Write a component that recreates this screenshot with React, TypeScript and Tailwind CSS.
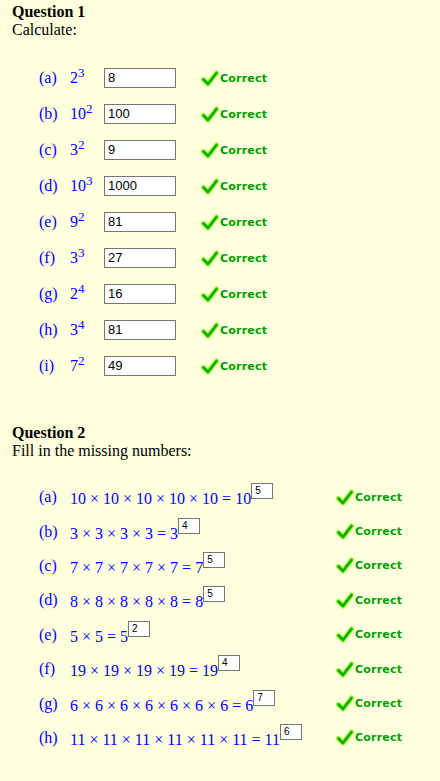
import React from "react";

interface Q1Row {
  label: string;
  base: string;
  exp: string;
  answer: string;
}

interface Q2Row {
  label: string;
  expr: string;
  base: string;
  answer: string;
}

const q1Rows: Q1Row[] = [
  { label: "(a)", base: "2", exp: "3", answer: "8" },
  { label: "(b)", base: "10", exp: "2", answer: "100" },
  { label: "(c)", base: "3", exp: "2", answer: "9" },
  { label: "(d)", base: "10", exp: "3", answer: "1000" },
  { label: "(e)", base: "9", exp: "2", answer: "81" },
  { label: "(f)", base: "3", exp: "3", answer: "27" },
  { label: "(g)", base: "2", exp: "4", answer: "16" },
  { label: "(h)", base: "3", exp: "4", answer: "81" },
  { label: "(i)", base: "7", exp: "2", answer: "49" },
];

const q2Rows: Q2Row[] = [
  { label: "(a)", expr: "10 × 10 × 10 × 10 × 10 =", base: "10", answer: "5" },
  { label: "(b)", expr: "3 × 3 × 3 × 3 =", base: "3", answer: "4" },
  { label: "(c)", expr: "7 × 7 × 7 × 7 × 7 =", base: "7", answer: "5" },
  { label: "(d)", expr: "8 × 8 × 8 × 8 × 8 =", base: "8", answer: "5" },
  { label: "(e)", expr: "5 × 5 =", base: "5", answer: "2" },
  { label: "(f)", expr: "19 × 19 × 19 × 19 =", base: "19", answer: "4" },
  { label: "(g)", expr: "6 × 6 × 6 × 6 × 6 × 6 × 6 =", base: "6", answer: "7" },
  { label: "(h)", expr: "11 × 11 × 11 × 11 × 11 × 11 =", base: "11", answer: "6" },
];

// green tick + "Correct" feedback badge
const Correct = () => (
  <span className="flex items-center">
    <svg width="18" height="17" viewBox="0 0 18 17">
      <path d="M2.5 9.5 L7 14 L15.5 3" fill="none" stroke="#99ff33" strokeWidth="5" strokeLinecap="round" strokeLinejoin="round" />
      <path d="M2.5 9.5 L7 14 L15.5 3" fill="none" stroke="#11aa00" strokeWidth="2.6" strokeLinecap="round" strokeLinejoin="round" />
    </svg>
    <span
      className="ml-[1px] text-[11px] font-bold leading-none text-[#00a000]"
      style={{ fontFamily: '"DejaVu Sans", sans-serif', letterSpacing: "0.2px" }}
    >
      Correct
    </span>
  </span>
);

const App = () => {
  return (
    <div className="min-h-[781px] bg-[#ffffdd] pl-3 pt-[3px] text-black" style={{ fontFamily: '"Liberation Serif", serif' }}>
      <div className="text-[16px] font-bold leading-[18px]">Question 1</div>
      <div className="text-[16px] leading-[18px]">Calculate:</div>

      <div className="mt-[21px] pl-[27px]">
        {q1Rows.map((row) => (
          <div key={row.label} className="flex h-[36px] items-center text-[16px] text-[#0000ff]">
            <span className="w-[31px]">{row.label}</span>
            <span className="w-[34px]">
              {row.base}
              <span className="relative top-[-6px] text-[13px] leading-none">{row.exp}</span>
            </span>
            <span className="flex h-[20px] w-[72px] items-center border border-[#767676] bg-white pl-[3px] text-[13px] text-black" style={{ fontFamily: '"Liberation Sans", sans-serif' }}>
              {row.answer}
            </span>
            <span className="ml-[25px]">
              <Correct />
            </span>
          </div>
        ))}
      </div>

      <div className="mt-[40px] text-[16px] font-bold leading-[18px]">Question 2</div>
      <div className="text-[16px] leading-[18px]">Fill in the missing numbers:</div>

      <div className="mt-[20px] pl-[27px]">
        {q2Rows.map((row) => (
          <div key={row.label} className="flex h-[34.4px] items-center text-[16px] text-[#0000ff]">
            <span className="w-[31px]">{row.label}</span>
            <span className="flex w-[266px] items-start">
              <span className="pt-[4px]">
                {row.expr}&nbsp;{row.base}
              </span>
              <span className="flex h-[16px] w-[22px] items-start border border-[#767676] bg-white pl-[3px] text-[10px] leading-[13px] text-black" style={{ fontFamily: '"Liberation Sans", sans-serif' }}>
                {row.answer}
              </span>
            </span>
            <Correct />
          </div>
        ))}
      </div>
    </div>
  );
};

export default App;
